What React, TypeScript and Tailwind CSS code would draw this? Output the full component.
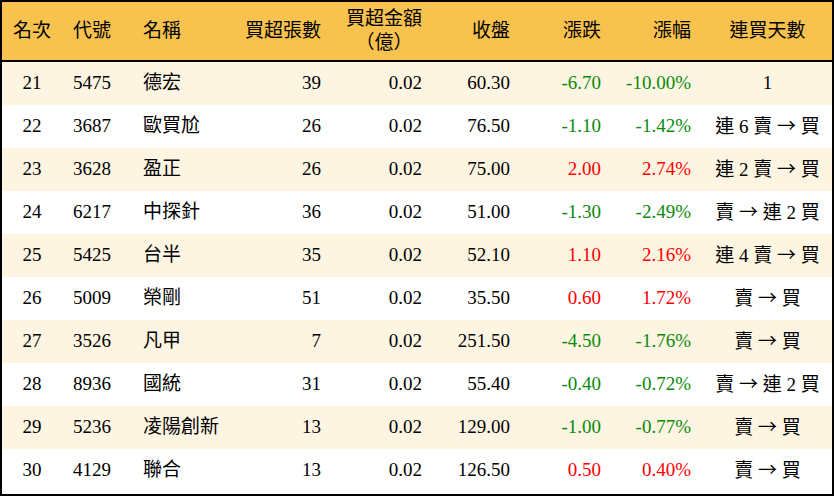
const rows = [
  { rank: 21, code: "5475", name: "德宏", vol: 39, amt: "0.02", close: "60.30", chg: "-6.70", pct: "-10.00%", days: "1" },
  { rank: 22, code: "3687", name: "歐買尬", vol: 26, amt: "0.02", close: "76.50", chg: "-1.10", pct: "-1.42%", days: "連 6 賣 → 買" },
  { rank: 23, code: "3628", name: "盈正", vol: 26, amt: "0.02", close: "75.00", chg: "2.00", pct: "2.74%", days: "連 2 賣 → 買" },
  { rank: 24, code: "6217", name: "中探針", vol: 36, amt: "0.02", close: "51.00", chg: "-1.30", pct: "-2.49%", days: "賣 → 連 2 買" },
  { rank: 25, code: "5425", name: "台半", vol: 35, amt: "0.02", close: "52.10", chg: "1.10", pct: "2.16%", days: "連 4 賣 → 買" },
  { rank: 26, code: "5009", name: "榮剛", vol: 51, amt: "0.02", close: "35.50", chg: "0.60", pct: "1.72%", days: "賣 → 買" },
  { rank: 27, code: "3526", name: "凡甲", vol: 7, amt: "0.02", close: "251.50", chg: "-4.50", pct: "-1.76%", days: "賣 → 買" },
  { rank: 28, code: "8936", name: "國統", vol: 31, amt: "0.02", close: "55.40", chg: "-0.40", pct: "-0.72%", days: "賣 → 連 2 買" },
  { rank: 29, code: "5236", name: "凌陽創新", vol: 13, amt: "0.02", close: "129.00", chg: "-1.00", pct: "-0.77%", days: "賣 → 買" },
  { rank: 30, code: "4129", name: "聯合", vol: 13, amt: "0.02", close: "126.50", chg: "0.50", pct: "0.40%", days: "賣 → 買" },
];

const cols = "grid grid-cols-[60px_69px_100px_102px_101px_88px_91px_90px_129px]";

// arrow in the CJK font is wider, like the reference
function Days({ text }: { text: string }) {
  const parts = text.split("→");
  return (
    <>
      {parts.map((p, i) => (
        <span key={i}>
          {i > 0 && <span style={{ fontFamily: '"Noto Sans CJK TC", sans-serif' }}>→</span>}
          {p}
        </span>
      ))}
    </>
  );
}

export default function App() {
  return (
    <div
      className="w-[834px] h-[496px] bg-white text-[19px] text-black border-2 border-black"
      style={{ fontFamily: '"Liberation Serif", "Noto Sans CJK TC", serif' }}
    >
      {/* Header */}
      <div className={`${cols} h-[60px] bg-[#f8c24f] border-b-2 border-black items-center leading-[24px]`}>
        <div className="text-center">名次</div>
        <div className="pl-[11px]">代號</div>
        <div className="pl-[12px]">名稱</div>
        <div className="pr-[12px] text-right">買超張數</div>
        <div className="pr-[12px] text-right">
          <div className="inline-block text-center leading-[24px]">
            買超金額
            <br />
            （億）
          </div>
        </div>
        <div className="pr-[12px] text-right">收盤</div>
        <div className="pr-[12px] text-right">漲跌</div>
        <div className="pr-[12px] text-right">漲幅</div>
        <div className="text-center">連買天數</div>
      </div>

      {/* Rows */}
      {rows.map((r, i) => {
        const color = r.chg.startsWith("-") ? "text-[#0b8a0b]" : "text-[#ff0000]";
        return (
          <div
            key={r.rank}
            className={`${cols} h-[43px] items-center ${i % 2 === 0 ? "bg-[#fdf5e2]" : "bg-white"}`}
          >
            <div className="text-center">{r.rank}</div>
            <div className="pl-[11px]">{r.code}</div>
            <div className="pl-[12px] whitespace-nowrap">{r.name}</div>
            <div className="pr-[12px] text-right">{r.vol}</div>
            <div className="pr-[12px] text-right">{r.amt}</div>
            <div className="pr-[12px] text-right">{r.close}</div>
            <div className={`pr-[12px] text-right ${color}`}>{r.chg}</div>
            <div className={`pr-[12px] text-right ${color}`}>{r.pct}</div>
            <div className="text-center whitespace-nowrap">
              <Days text={r.days} />
            </div>
          </div>
        );
      })}
    </div>
  );
}
